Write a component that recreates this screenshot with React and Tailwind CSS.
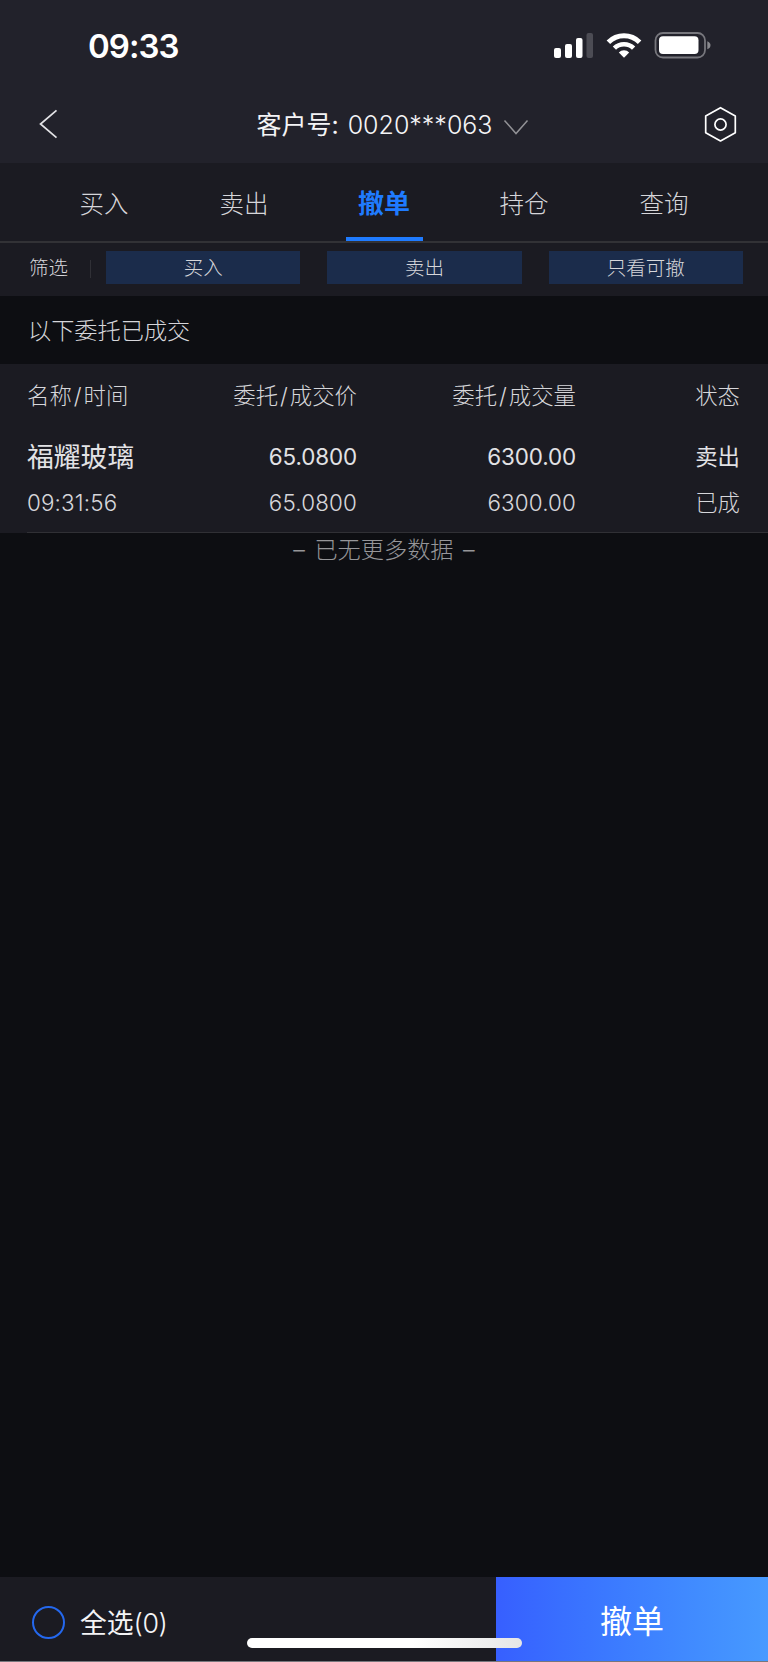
import { useState } from "react";

const tabs = ["买入", "卖出", "撤单", "持仓", "查询"];
const filters = ["买入", "卖出", "只看可撤"];

const orders = [
  {
    name: "福耀玻璃",
    time: "09:31:56",
    price: "65.0800",
    dealPrice: "65.0800",
    amount: "6300.00",
    dealAmount: "6300.00",
    side: "卖出",
    status: "已成",
  },
];

function StatusBar() {
  return (
    <div className="h-[88px] shrink-0 flex items-start justify-between pl-[88px] pr-[56px]">
      <span className="mt-[26px] text-[33px] leading-[40px] tracking-[-1px] font-semibold text-white">09:33</span>
      <svg className="mt-[30px]" width="158" height="30" viewBox="0 0 158 30" fill="none">
        <rect x="0" y="18" width="7" height="10" rx="2" fill="#fff" />
        <rect x="11" y="14" width="7" height="14" rx="2" fill="#fff" />
        <rect x="22" y="8" width="6.5" height="20" rx="2" fill="#fff" />
        <rect x="32.5" y="3" width="6.5" height="25" rx="2" fill="#4c4c54" />
        <path d="M54.4 12.2a22 22 0 0 1 31.2 0" stroke="#fff" strokeWidth="5" />
        <path d="M60.4 18.2a13.6 13.6 0 0 1 19.2 0" stroke="#fff" strokeWidth="4.6" />
        <path d="M70 27.8l-5.2-5.3a7.4 7.4 0 0 1 10.4 0z" fill="#fff" />
        <rect x="101.5" y="3" width="49.5" height="24.5" rx="7.5" stroke="#77777d" strokeWidth="1.8" />
        <rect x="105" y="6.3" width="39.5" height="17.8" rx="4" fill="#fff" />
        <path d="M153.3 11.2c4.3 1.6 4.3 6.5 0 8.1z" fill="#88888d" />
      </svg>
    </div>
  );
}

function Header() {
  return (
    <div className="h-[75px] shrink-0 flex items-start justify-between pl-[39px] pr-[31px] text-[#f4f4f6]">
      <svg className="mt-[21px]" width="20" height="30" viewBox="0 0 20 30" fill="none">
        <path d="M17.5 1.3L1.5 15L17.5 28.7" stroke="#e3e3e6" strokeWidth="1.7" />
      </svg>
      <div className="mt-[19px] ml-[23px] flex items-center h-[36px] text-[25px] leading-[36px] whitespace-nowrap">
        <span>客户号:</span>
        <span className="ml-[9px] font-light">0020***063</span>
        <svg className="ml-[10px] mt-[3px]" width="26" height="16" viewBox="0 0 26 16" fill="none">
          <path d="M1.5 1.5L13 14.5L24.5 1.5" stroke="#929296" strokeWidth="1.5" />
        </svg>
      </div>
      <svg className="mt-[18px]" width="34" height="37" viewBox="0 0 34 37" fill="none" stroke="#fff" strokeWidth="1.7">
        <path d="M17.5 1.7L32.3 10V26.7L17.5 35L2.7 26.7V10Z" strokeLinejoin="round" />
        <circle cx="17.5" cy="18.5" r="5.6" />
      </svg>
    </div>
  );
}

function Pair({ first, second }) {
  return (
    <>
      {first}
      <span className="mx-[2px]">/</span>
      {second}
    </>
  );
}

export default function App() {
  const [active, setActive] = useState("撤单");
  const [checked, setChecked] = useState(false);

  return (
    <div className="w-[768px] h-[1662px] flex flex-col overflow-hidden bg-[#0d0e12] text-[#d6d6da] font-['Inter','Noto_Sans_CJK_SC',sans-serif]">
      <header className="flex flex-col bg-[#22222b]">
        <StatusBar />
        <Header />
      </header>

      <nav className="h-[80px] shrink-0 flex px-[34px] bg-[#1b1b22] border-b-2 border-[#323236]">
        {tabs.map((tab) => (
          <button
            key={tab}
            onClick={() => setActive(tab)}
            className={`flex-1 flex flex-col items-center justify-between pt-[22px] ${
              tab === active
                ? "text-[#1f7bff] text-[26px] font-bold"
                : "text-[24.5px] font-light"
            }`}
          >
            <span className="leading-[38px]">{tab}</span>
            {tab === active && <span className="w-[77px] h-[4px] bg-[#1f7bff]" />}
          </button>
        ))}
      </nav>

      <div className="h-[53px] shrink-0 flex items-start pt-[8px] pl-[29px] pr-[25px] bg-[#1b1b22] text-[19.5px] leading-[33px] font-light">
        <span className="pt-px">筛选</span>
        <span className="w-px h-[18px] mt-[9px] ml-[22px] mr-[15px] bg-[#303036]" />
        <div className="flex-1 grid grid-cols-3 gap-[27px]">
          {filters.map((f) => (
            <button key={f} className="h-[33px] pt-px leading-[32px] bg-[#1b2c4b]">{f}</button>
          ))}
        </div>
      </div>

      <div className="h-[68px] shrink-0 px-[28px] text-[23.2px] leading-[70px] font-light">
        以下委托已成交
      </div>

      <section className="h-[169px] shrink-0 bg-[#1b1b22] font-light">
        <div className="flex pl-[27px] pr-[28px] pt-[11px] text-[22.4px] leading-[41px] h-[51px] whitespace-nowrap">
          <span className="w-[141px]"><Pair first="名称" second="时间" /></span>
          <span className="w-[189px] text-right"><Pair first="委托" second="成交价" /></span>
          <span className="w-[219px] text-right"><Pair first="委托" second="成交量" /></span>
          <span className="flex-1 text-right">状态</span>
        </div>
        {orders.map((o) => (
          <div key={o.time} className="ml-[27px] h-[118px] border-b border-[#303035] text-[22.4px]">
            <div className="flex items-center pr-[28px] pt-[22px] h-[62px] font-normal text-[#e2e2e5]">
              <span className="w-[141px] text-[26.8px]">{o.name}</span>
              <span className="w-[189px] text-right tracking-[-0.1px]">{o.price}</span>
              <span className="w-[219px] text-right tracking-[-0.1px]">{o.amount}</span>
              <span className="flex-1 text-right">{o.side}</span>
            </div>
            <div className="flex items-center pr-[28px] h-[52px] tracking-[0.15px]">
              <span className="w-[141px]">{o.time}</span>
              <span className="w-[189px] text-right">{o.dealPrice}</span>
              <span className="w-[219px] text-right">{o.dealAmount}</span>
              <span className="flex-1 text-right tracking-normal">{o.status}</span>
            </div>
          </div>
        ))}
      </section>

      <p className="text-center text-[23.2px] leading-[34px] font-light text-[#969699] [word-spacing:3px]">– 已无更多数据 –</p>

      <footer className="relative mt-auto h-[85px] shrink-0 flex bg-[#1b1b22] border-b border-[#77777d]">
        <button
          onClick={() => setChecked(!checked)}
          className="flex-1 flex items-center pl-[32px] pt-[6px] text-[26.8px] text-[#f4f4f6]"
        >
          <span className={`size-[33px] rounded-full border-2 border-[#2468ee] ${checked ? "bg-[#2468ee]" : ""}`} />
          <span className="ml-[15px] pt-[2px]">
            全选<span className="font-light tracking-[-0.5px]">({checked ? orders.length : 0})</span>
          </span>
        </button>
        <button className="w-[272px] pt-[6px] bg-linear-to-r from-[#375fff] to-[#479aff] text-[32px] text-white">
          撤单
        </button>
        {/* home indicator */}
        <div className="absolute left-[247px] top-[61px] w-[275px] h-[10px] rounded-full bg-linear-to-r from-white from-60% to-[#e6e6e6]" />
      </footer>
    </div>
  );
}
